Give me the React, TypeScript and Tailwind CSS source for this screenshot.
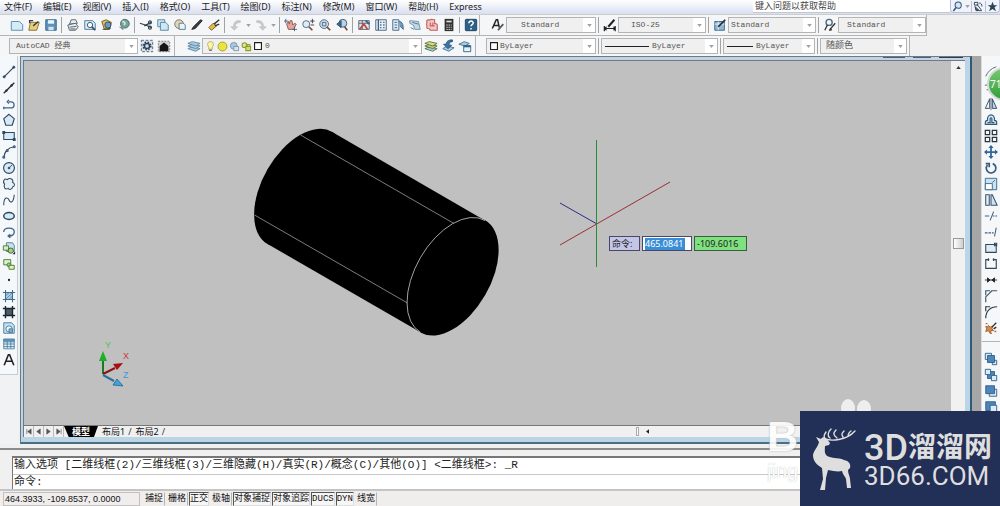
import React from "react";

const S = "#2b4763";
const B = "#7fb2d6";

const glyphs: Record<string, React.ReactNode> = {
  new: <path d="M1.500 4h9l4 3.500v6.500h-13z" fill="#d5ecf7" stroke="#4f86a8" />,
  open: (
    <g>
      <path d="M2 14l2-9h10l-3 9z" fill="#e8cf79" stroke="#7d6a35" />
      <path d="M3 6V3h4M7 9l6-5" stroke="#3a3a3a" fill="none" strokeWidth="1.500" />
    </g>
  ),
  save: (
    <g>
      <path d="M2 2h12v12H2z" fill="#5b94bb" stroke="#2f607f" />
      <path d="M4.500 2.500h7v4h-7z" fill="#e9f5fb" />
      <path d="M5 10h6v4H5z" fill="#cfe2ee" />
    </g>
  ),
  plot: (
    <g stroke="#4f5a66" fill="#e8edf2">
      <path d="M4 7l2-5h5l2 4z" />
      <path d="M2 8l9-2 3 4-3 4H4z" />
      <path d="M4 10.500l8-1M5 12.500h6" />
    </g>
  ),
  preview: (
    <g>
      <path d="M2 3h9l3 3v7H2z" fill="#d8eaf4" stroke="#44779a" />
      <circle cx="8" cy="8" r="3" fill="#fff" stroke="#2c4a68" />
      <path d="M10 10l4 4" stroke="#2c4a68" strokeWidth="2" />
    </g>
  ),
  publish: (
    <g>
      <path d="M2 4l5-2 6 3-2 8H5z" fill="#e0c054" stroke="#68562a" />
      <circle cx="9" cy="8" r="3.500" fill="#6b9cc5" stroke="#2d4862" />
      <path d="M3 13l9-1" stroke="#333" />
    </g>
  ),
  globe: (
    <g>
      <circle cx="9" cy="6.500" r="5" fill="#76a58f" stroke="#42636a" />
      <path d="M6 4c3 0 4 2 2 4" stroke="#cfe7ec" fill="none" strokeWidth="2" />
      <path d="M2 10l5 4 1-4z" fill="#7e8f9d" />
    </g>
  ),
  cut: (
    <g fill="none" stroke="#33404c" strokeWidth="1.300">
      <path d="M1 6l8 2.500M14 5L6 9M14 11L8 8" />
      <circle cx="12.500" cy="5" r="1.700" />
      <circle cx="12.500" cy="11" r="1.700" />
    </g>
  ),
  copy: (
    <g fill="#cfe7f3" stroke="#4a7f9f">
      <path d="M2 2h8v8H2z" />
      <path d="M5 5h6l3 3v6H5z" />
    </g>
  ),
  paste: (
    <g>
      <circle cx="7" cy="7" r="5" fill="#ddd6bd" stroke="#756f52" />
      <path d="M7 6h5l2 2v5H7z" fill="#e9f4f9" stroke="#54748a" />
    </g>
  ),
  match: <path d="M2 13l4-1 8-9-2-1-8 8z" fill="#3e3a35" stroke="#22201e" />,
  blockEdit: (
    <g>
      <path d="M2 11l5-5 4 3-6 5z" fill="#e7b94a" stroke="#775820" />
      <path d="M8 7l6-5M9 9l5-2" stroke="#333" strokeWidth="1.500" />
    </g>
  ),
  undo: <path d="M13 3C8 2 5 5 5 10H2l4 4 4-4H7c0-3 2-5 6-5z" fill="#c9c9c9" stroke="#b2b2b2" strokeWidth=".5" />,
  redo: <path d="M3 3c5-1 8 2 8 7h3l-4 4-4-4h3c0-3-2-5-6-5z" fill="#c9c9c9" stroke="#b2b2b2" strokeWidth=".5" />,
  pan: (
    <g>
      <path d="M3 7l2 6h6l3-6-2-1-2 2-1-5-2 0-1 4-1-3z" fill="#e0a79d" stroke="#8d5048" />
      <path d="M2 1v5M0 3.500h5M12 10v5M10 13h5" stroke="#3d5e88" />
    </g>
  ),
  zoomRt: (
    <g fill="none" stroke="#45617c">
      <circle cx="6" cy="7" r="4" fill="#dcebf5" />
      <path d="M9 10l4 4" strokeWidth="2" stroke="#7d4a36" />
      <path d="M13 1v5M10.500 3.500h5M11 8h4" stroke="#333" />
    </g>
  ),
  zoomWin: (
    <g fill="none" stroke="#45617c">
      <circle cx="7" cy="7" r="5" fill="#cfe1ee" />
      <path d="M5 5h4v4H5z" />
      <path d="M10 10l4 4" strokeWidth="2" stroke="#7d4a36" />
    </g>
  ),
  zoomPrev: (
    <g fill="none" stroke="#38546f">
      <circle cx="9" cy="6" r="4.500" fill="#b9d3e6" />
      <path d="M2 7l5-4v8z" fill="#3a6593" />
      <path d="M11 10l3 4" strokeWidth="2" stroke="#7d4a36" />
    </g>
  ),
  props: (
    <g>
      <path d="M2 3h12v10H2z" fill="#e9e0e4" stroke="#4c5f73" />
      <path d="M2 6h12M6 3v10" stroke="#4c5f73" />
      <path d="M3 13l5-6 4 6" stroke="#b84943" fill="none" strokeWidth="2" />
      <path d="M10 3l4 4" stroke="#345e91" strokeWidth="2" />
    </g>
  ),
  design: (
    <g stroke="#3f5f7e" fill="#e7f1f7">
      <path d="M2 2h12v12H2z" />
      <path d="M5 2v12M7 5h1.500M10.500 5H12M7 8h1.500M10.500 8H12M7 11h1.500M10.500 11H12" strokeWidth="1.500" />
    </g>
  ),
  palettes: (
    <g stroke="#3f5f7e" fill="#dcebf4">
      <path d="M2 2h7v12H2z" />
      <path d="M4 5h3M4 8h3M4 11h3" />
      <path d="M9 4c4 0 5 3 5 9l-4-4" fill="#6c9dc1" />
    </g>
  ),
  sheets: (
    <g stroke="#6c8fa6" fill="#c1d7e3">
      <path d="M2 3l10 1 2 9H8L6 8 2 6z" />
      <path d="M3 11l4 2M5 5l7 2" stroke="#4d7087" />
    </g>
  ),
  markup: (
    <g stroke="#c4605d" fill="#f1c8c5" strokeWidth="1.300">
      <path d="M2 3c2-2 3 0 4-1s3 0 5 0v4c1 1 3 0 3 2s0 3 0 6H6c0-2-1-2-3-2s0-3-1-4 1-3 0-5z" />
      <path d="M6 5v4h5M9 5v4" fill="none" />
    </g>
  ),
  calc: (
    <g>
      <path d="M3 1h10v14H3z" fill="#303030" />
      <path d="M5 3h6v2H5z" fill="#d8e0cf" />
      <path d="M5 8h1.500M7.500 8H9M10 8h1M5 10.500h1.500M7.500 10.500H9M10 10.500h1M5 13h1.500M7.500 13H9M10 13h1" stroke="#fff" />
    </g>
  ),
  help: (
    <g>
      <rect x="1.500" y="1.500" width="13" height="13" rx="1" fill="#2d6089" stroke="#1b3f5d" />
      <path d="M5.500 6c0-3.500 5.500-3 5 0-.3 1.600-2.500 1.500-2.500 3.500M8 11.500v1.500" fill="none" stroke="#fff" strokeWidth="1.700" />
    </g>
  ),
  textStyle: (
    <g fill="none" stroke="#222" strokeWidth="1.700">
      <path d="M1.500 12L6 2h1.500l2 9M3 8.500h6" />
      <path d="M8 14l6-7" strokeWidth="2" stroke="#555" />
    </g>
  ),
  dimStyle: (
    <g fill="none" stroke="#222" strokeWidth="1.300">
      <path d="M1.500 9v6M14 9v6M2 12h12M4 10l-2 2 2 2M12 10l2 2-2 2" />
      <path d="M6 10l7-8" strokeWidth="2.200" />
    </g>
  ),
  tableStyle: (
    <g>
      <path d="M2 4h11v10H2z" fill="#90b9d6" stroke="#345f82" />
      <path d="M2 7h11M6 4v10" stroke="#e6f2f9" />
      <path d="M6 10l8-8" stroke="#2a2a2a" strokeWidth="2" />
    </g>
  ),
  leaderStyle: (
    <g fill="none" stroke="#333" strokeWidth="1.500">
      <circle cx="7" cy="5" r="3.500" stroke="#4a6680" />
      <path d="M5 8l-3 6M8 13l6-7" />
      <path d="M7 14l3-1" strokeWidth="2" />
    </g>
  ),
  gear: (
    <g>
      <path d="M1.500 1.500h13v13h-13z" fill="#d8e2ea" stroke="#41566b" strokeDasharray="3 2" />
      <circle cx="8" cy="8" r="4.300" fill="none" stroke="#2d3f52" strokeWidth="1.800" strokeDasharray="1.700 1.700" />
      <circle cx="8" cy="8" r="3" fill="#9fb6c9" stroke="#2d3f52" strokeWidth="1.500" />
      <circle cx="8" cy="8" r="1" fill="#fff" />
    </g>
  ),
  home: (
    <g>
      <path d="M1.500 2.500h13v12h-13z" fill="#cfd3d6" stroke="#777" strokeDasharray="2 1.500" />
      <path d="M8 4l5 4v6H3V8z" fill="#151515" />
    </g>
  ),
  layers: (
    <g fill="#a6cbe2" stroke="#5f87a3">
      <path d="M1 11l5-2 9 2-5 3z" />
      <path d="M1 8l5-2 9 2-5 3z" />
      <path d="M1 5l5-2 9 2-5 3z" />
    </g>
  ),
  layersGreen: (
    <g fill="#b5cc86" stroke="#56713b">
      <path d="M1 11l5-2 9 2-5 3z" fill="#a6cbe2" />
      <path d="M1 8l5-2 9 2-5 3z" />
      <path d="M1 5l5-2 9 2-5 3z" fill="#e0d67b" />
    </g>
  ),
  layerPrev: (
    <g>
      <path d="M2 11l5-3 8 2-6 4z" fill="#a6cbe2" stroke="#47718f" />
      <path d="M13 1c-5 0-7 2-7 5H3l5 5 4-4H9c0-2 1-4 4-4z" fill="#3b76a8" stroke="#214a6e" />
    </g>
  ),
  layerState: (
    <g>
      <path d="M1 6l6-3 6 2-5 3z" fill="#a6cbe2" stroke="#47718f" />
      <path d="M6.500 7.500h8v7h-8z" fill="#e6f2f9" stroke="#2f6189" />
      <path d="M6.500 8.500h8" stroke="#2f6189" strokeWidth="2" />
    </g>
  ),
  bulb: (
    <g>
      <path d="M8 1c5 0 5 5 2.500 8v3h-5V9C3 6 3 1 8 1z" fill="#fdf7a4" stroke="#9a9348" />
      <path d="M6 13.500h4" stroke="#555" strokeWidth="1.500" />
    </g>
  ),
  sun: <circle cx="8" cy="8" r="6.500" fill="#ece43e" stroke="#8b8726" />,
  freeze: (
    <g stroke="#5f819b">
      <circle cx="7" cy="7" r="5" fill="#a9c7dc" />
      <path d="M7 8h7v6H7z" fill="#d5e5ef" />
    </g>
  ),
  lock: (
    <g stroke="#8c9a34" fill="none" strokeWidth="1.500">
      <circle cx="5" cy="6" r="3.500" fill="#dbe386" />
      <path d="M7 8h7v6H7zM9 8V5h4v3" fill="#d4dc74" />
    </g>
  ),
  square: <path d="M2.500 2.500h11v11h-11z" fill="#fff" stroke="#222" strokeWidth="1.800" />,
  line: (
    <g stroke={S} fill={S}>
      <path d="M2.500 13.500l11-11" strokeWidth="1.300" />
      <circle cx="2.500" cy="13.500" r="1.200" />
      <circle cx="13.500" cy="2.500" r="1.200" />
    </g>
  ),
  xline: (
    <g stroke="#26333f" fill="#26333f">
      <path d="M2 14L14 2" strokeWidth="1.600" />
      <circle cx="5" cy="11" r="1" />
      <circle cx="11" cy="5" r="1" />
    </g>
  ),
  pline: <path d="M2 12.500h8c5 0 5-7 0-7H8M8 3.500l-2 2 2 2M2 11v3" fill="none" stroke="#3d6488" strokeWidth="1.500" />,
  polygon: <path d="M8 1.500l6 5-2.300 7.500H4.300L2 6.500z" fill="#d6eaf5" stroke={S} strokeWidth="1.300" />,
  rect: <path d="M2 4h12v8H2zM1 3h2v2H1zM13 11h2v2h-2z" fill="#d6eaf5" stroke={S} strokeWidth="1.200" />,
  arc: (
    <g stroke={S} fill="none">
      <path d="M2 14C3 7 7 3 14 2" strokeWidth="1.300" />
      <path d="M1 13h2v2H1zM13 1h2v2h-2zM5 5.500h2v2H5z" fill={B} />
    </g>
  ),
  circle: (
    <g stroke={S}>
      <circle cx="8" cy="8" r="6.200" fill="#d6eaf5" strokeWidth="1.300" />
      <path d="M8 8l3.500-3.500" />
      <circle cx="8" cy="8" r="1" fill={S} />
    </g>
  ),
  cloud: <path d="M3 8C0 5 3 1 6 3c3-3 8 0 6 3 3 1 3 5 0 5.500 0 3-4 3.500-5 1.500-3 2-6-1-4-5z" fill="#e4f0f7" stroke={S} strokeWidth="1.200" />,
  spline: <path d="M2 14C2 3 7 5 8 8s5 5 6-6" fill="none" stroke={S} strokeWidth="1.200" />,
  ellipse: <ellipse cx="8" cy="8" rx="6" ry="4" fill="#d6eaf5" stroke={S} strokeWidth="1.700" />,
  earc: <path d="M2 8c0-6 12-6 12 0 0 3-3 5-6 4.500M9.500 10.500L7 12.500l2.500 2" fill="none" stroke="#3d6488" strokeWidth="1.500" />,
  insert: (
    <g>
      <path d="M5 2h7l2 3v7H5z" fill="#c9e2f0" stroke="#4a7590" />
      <path d="M1.500 5.500h6v5h-6z" fill="#d9ecc2" stroke="#41762f" />
      <circle cx="10" cy="11" r="3" fill="#a8cf84" stroke="#355f28" />
      <path d="M12 15h3v-3z" fill="#222" />
    </g>
  ),
  block: (
    <g stroke="#41762f">
      <path d="M2 3h8v6H2z" fill="#dff0cd" />
      <circle cx="8" cy="9" r="2.200" fill="#a8cf84" />
      <path d="M8 9.500h6v4.500H8z" fill="#e6efb9" />
    </g>
  ),
  point: <circle cx="8" cy="8" r="1.300" fill="#222" />,
  hatch: (
    <g stroke="#3f6a8c">
      <path d="M4 4h8v8H4z" fill="#a8cde4" />
      <path d="M1 4h14M1 12h14M4 1v14M12 1v14" strokeWidth="1.200" />
      <path d="M4 8l4-4M4 12l8-8M8 12l4-4" strokeWidth=".7" />
    </g>
  ),
  gradient: (
    <g stroke="#1c252d">
      <path d="M4 4h8v8H4z" fill="#4d5b66" />
      <path d="M1 4h14M1 12h14M4 1v14M12 1v14" strokeWidth="1.600" />
    </g>
  ),
  region: (
    <g stroke="#44779a">
      <path d="M2 2h9l3 3v9H2z" fill="#c4e0ef" />
      <circle cx="8" cy="9" r="3.500" fill="#eef7fb" />
      <path d="M8 9h4v4H8z" fill="#84b3cf" />
    </g>
  ),
  table: (
    <g stroke="#4c7fa3">
      <path d="M2 2.500h12v11H2z" fill="#e3f1f8" />
      <path d="M2 5.500h12M2 8h12M2 11h12M6 3v10M10 3v10" />
      <path d="M2 2.500h12v2H2z" fill="#6fa2c4" />
    </g>
  ),
  mtext: <path d="M2.500 14L7.300 2h1.400l4.800 12M4.500 9.500h7" fill="none" stroke="#222" strokeWidth="1.800" />,
  erase: <path d="M2 13c2-5 6-9 12-11M8 13h4" fill="none" stroke="#4b5d6e" />,
  copyObj: <path d="M1 5l4-1M5 2v4M3 10h4M9 11a2 2 0 1 0 .1 0" fill="none" stroke="#3b5873" />,
  mirror: (
    <g stroke="#27445f">
      <path d="M6.500 2v11H1.500z" fill="#f1f6fa" />
      <path d="M9.500 2v11h5z" fill="#b9d7e8" />
      <path d="M8 1v14" stroke="#667" />
    </g>
  ),
  offset: (
    <g fill="#d3e8f4" stroke="#31577a" strokeWidth="1.300">
      <path d="M1.500 13v-2c0-2 1-2.500 2.500-2.500C3 0 13 0 12 8.500c1.500 0 2.500.5 2.500 2.500v2z" />
      <path d="M4 11h3V6.500c0-1.500 2-1.500 2 0V11h3" fill="none" />
    </g>
  ),
  array: <path d="M1.500 1.500h5v5h-5zM9.500 1.500h5v5h-5zM1.500 9.500h5v5h-5zM9.500 9.500h5v5h-5z" fill="#f3f7fa" stroke="#27333e" strokeWidth="1.400" />,
  move: <path d="M8 0l3 3.500H9V7h3.500V5L16 8l-3.500 3V9H9v3.500h2L8 16l-3-3.500h2V9H3.500v2L0 8l3.500-3v2H7V3.500H5z" fill="#2f659a" />,
  rotate: (
    <g fill="none" stroke="#33597e" strokeWidth="1.900">
      <path d="M4 4.500a5.500 5.500 0 1 0 6-1.500" />
      <path d="M2 3h4v4" />
    </g>
  ),
  scale: (
    <g stroke="#34628a" fill="#cbe3f1">
      <path d="M1.500 1.500h13v13h-13z" />
      <path d="M1.500 7.500h8v7h-8z" fill="#fff" />
      <path d="M9.500 6.500l3-3" fill="none" />
    </g>
  ),
  stretch: (
    <g stroke="#34536f" fill="#e6f1f7" strokeWidth="1.200">
      <path d="M2 2h4v12H2z" />
      <path d="M8 2h1.500L15 14H8z" fill="#cfe3ef" />
    </g>
  ),
  trim: <path d="M1 8h5M7 13l4-10M10 8h2M13 8h2" fill="none" stroke="#43627d" strokeWidth="1.200" />,
  extend: <path d="M1 9h3M5 9h3M9 9h2M12 13l2-10" fill="none" stroke="#43627d" strokeWidth="1.200" />,
  breakPt: <path d="M2 4h12v9H2zM12 2.500h2.500v3H12z" fill="#dcebf4" stroke="#31475c" strokeWidth="1.200" />,
  brk: <path d="M6 3H2v10h12V3h-4M5 1.500v3M11 1.500v3" fill="none" stroke="#31475c" strokeWidth="1.300" />,
  join: <path d="M1 8h14M4 5.500l3 2.500-3 2.500zM12 5.500L9 8l3 2.500z" fill="#222" stroke="#222" />,
  chamfer: <path d="M2 15V9l7-7h6M2 7V2h5" fill="none" stroke="#3d556b" strokeWidth="1.300" />,
  fillet: <path d="M2 15C2 7 7 2 15 2M2 7V2h5" fill="none" stroke="#26394b" strokeWidth="1.300" />,
  explode: (
    <g>
      <path d="M2 6l2 1 1-2 2 2 3-1-1 3 2 2-3 0-1 3-2-3-3 1 1-3z" fill="#d98944" stroke="#9a5a2b" />
      <path d="M2 3h2M12 12h2M7 14h2" stroke="#b86c34" strokeWidth="1.500" />
      <path d="M9 7l5-5M11 9l3-2" stroke="#333" strokeWidth="1.600" />
    </g>
  ),
  front: (
    <g stroke="#2d5d87">
      <path d="M1.500 1.500h7v7h-7zM9.500 9.500h5v5h-5z" fill="#dcecf6" />
      <path d="M4 4h8v8H4z" fill="#4d86b8" />
    </g>
  ),
  back: (
    <g stroke="#2d5d87">
      <path d="M4 4h8v8H4z" fill="#4d86b8" />
      <path d="M1.500 1.500h6v6h-6zM8.500 8.500h6v6h-6z" fill="#dcecf6" />
    </g>
  ),
  above: (
    <g stroke="#2d5d87">
      <path d="M6 6h8.500v8H6z" fill="#dcecf6" />
      <path d="M2 2h10v9H2z" fill="#4d86b8" />
    </g>
  ),
  under: (
    <g stroke="#2d5d87">
      <path d="M2 2h11v10H2z" fill="#4d86b8" />
      <path d="M7 6h7.500v8H7z" fill="#dcecf6" />
    </g>
  ),
  search: (
    <g stroke="#33597e" fill="#d3e5f2" strokeWidth="1.500">
      <circle cx="9" cy="6" r="4.500" />
      <path d="M6 9.500l-4 5" strokeWidth="2.200" />
    </g>
  ),
  comm: (
    <g stroke="#2b3947" fill="none" strokeWidth="1.300">
      <path d="M2 2h5v4H2zM6 5l6 8M4 14h9M9 3c3 0 4 2 4 5" />
      <path d="M3 8l5 5H4z" fill="#5d7a96" />
    </g>
  ),
  star: <path d="M8 1l2 5h5l-4 3 2 6-5-3.500L3 15l2-6-4-3h5z" fill="#2c4258" />,
};

function Glyph({ name, size = "h-[14px] w-[14px]" }: { name: string; size?: string }) {
  return (
    <svg viewBox="0 0 16 16" aria-hidden="true" className={`${size} block shrink-0`}>
      {glyphs[name]}
    </svg>
  );
}

function Tool({ name }: { name: string }) {
  return (
    <button type="button" aria-label={name} className="flex h-4 w-[17px] shrink-0 items-center justify-center">
      <Glyph name={name} />
    </button>
  );
}

function Sep() {
  return (
    <span className="flex w-[5px] shrink-0 justify-center">
      <span className="h-4 w-px bg-[#a2a2a2]" />
    </span>
  );
}

function Caret({ width }: { width: string }) {
  return (
    <span className={`flex shrink-0 items-center justify-center ${width}`}>
      <svg viewBox="0 0 6 4" aria-hidden="true" className="h-[3px] w-[5px]">
        <path d="M0 0h6L3 4z" fill="#a0a0a0" />
      </svg>
    </span>
  );
}

function Combo({ label, value, width, pad = "pl-1", text = "text-[8px]", children }: { label: string; value: string; width: string; pad?: string; text?: string; children?: React.ReactNode }) {
  return (
    <label className={`flex h-4 shrink-0 items-center border border-[#b4b4b4] bg-[#f0f0f0] ${width}`}>
      {children}
      <select
        aria-label={label}
        className={`h-full min-w-0 flex-1 appearance-none bg-transparent font-['Liberation_Mono','Noto_Sans_CJK_SC',monospace] leading-[14px] text-[#555] outline-none ${text} ${pad}`}
      >
        <option>{value}</option>
      </select>
      <span className="flex h-full bg-white">
        <Caret width="w-3" />
      </span>
    </label>
  );
}

const menus = ["文件(F)", "编辑(E)", "视图(V)", "插入(I)", "格式(O)", "工具(T)", "绘图(D)", "标注(N)", "修改(M)", "窗口(W)", "帮助(H)", "Express"];
const drawTools = ["line", "xline", "pline", "polygon", "rect", "arc", "circle", "cloud", "spline", "ellipse", "earc", "insert", "block", "point", "hatch", "gradient", "region", "table", "mtext"];
const modifyTools = ["erase", "copyObj", "mirror", "offset", "array", "move", "rotate", "scale", "stretch", "trim", "extend", "breakPt", "brk", "join", "chamfer", "fillet", "explode"];
const modes = [
  { name: "捕捉", on: false },
  { name: "栅格", on: false },
  { name: "正交", on: true },
  { name: "极轴", on: false },
  { name: "对象捕捉", on: true },
  { name: "对象追踪", on: true },
  { name: "DUCS", on: true },
  { name: "DYN", on: true },
  { name: "线宽", on: false },
];

function MenuBar() {
  return (
    <header className="flex h-[14px] items-center bg-linear-to-b from-white to-[#d9dff0]">
      <nav className="flex gap-[11px] pl-1 text-[9px] leading-[14px] text-[#1c1c1c]">
        {menus.map((m) => (
          <button key={m} type="button" className="whitespace-nowrap">
            {m}
          </button>
        ))}
      </nav>
      <div className="ml-auto flex h-full">
        <input
          aria-label="搜索帮助"
          placeholder="键入问题以获取帮助"
          className="h-[13px] w-[197px] border-b border-[#c2c8d4] bg-white pl-[2px] text-[9px] text-[#333] outline-none placeholder:text-[#444]"
        />
        <div className="flex h-[13px] items-center rounded-b border border-t-0 border-[#b7c1d6] bg-[#f0f3fa]">
          <button type="button" aria-label="搜索" className="px-px"><Glyph name="search" size="h-[11px] w-[11px]" /></button>
          <Caret width="w-[7px]" />
          <button type="button" aria-label="通讯中心" className="border-l border-[#b7c1d6] px-px"><Glyph name="comm" size="h-[11px] w-[11px]" /></button>
          <button type="button" aria-label="收藏夹" className="border-l border-[#b7c1d6] px-px"><Glyph name="star" size="h-[11px] w-[11px]" /></button>
        </div>
      </div>
    </header>
  );
}

function StandardBar() {
  const bar = "flex h-full items-center border-r border-b border-[#b4b4b4] bg-[#f5f6f7]";
  return (
    <div className="flex h-[22px] shrink-0 border-t border-[#cdcdcd]">
      <div className={`${bar} w-[480px] shrink-0 pl-2`}>
        {["new", "open", "save"].map((n) => <Tool key={n} name={n} />)}
        <Sep />
        {["plot", "preview", "publish", "globe"].map((n) => <Tool key={n} name={n} />)}
        <Sep />
        {["cut", "copy", "paste", "match", "blockEdit"].map((n) => <Tool key={n} name={n} />)}
        <Sep />
        <Tool name="undo" />
        <Caret width="w-2" />
        <Tool name="redo" />
        <Caret width="w-2" />
        <Sep />
        {["pan", "zoomRt", "zoomWin", "zoomPrev"].map((n) => <Tool key={n} name={n} />)}
        <Sep />
        {["props", "design", "palettes", "sheets", "markup", "calc"].map((n) => <Tool key={n} name={n} />)}
        <Sep />
        <Tool name="help" />
      </div>
      <div className={`${bar} w-[447px] shrink-0 pl-[9px]`}>
        <Tool name="textStyle" />
        <Combo label="文字样式" value="Standard" width="w-[90px]" pad="pl-[14px]" />
        <Sep />
        <Tool name="dimStyle" />
        <Combo label="标注样式" value="ISO-25" width="w-[88px]" pad="pl-3" />
        <Sep />
        <Tool name="tableStyle" />
        <Combo label="表格样式" value="Standard" width="w-[88px]" pad="pl-[2px]" />
        <Sep />
        <Tool name="leaderStyle" />
        <Combo label="多重引线样式" value="Standard" width="w-[88px]" pad="pl-2" />
      </div>
    </div>
  );
}

function LayerBar() {
  const bar = "flex h-full shrink-0 items-center border-r border-[#b4b4b4] bg-[#f5f6f7]";
  return (
    <div className="flex h-5 shrink-0">
      <div className={`${bar} w-[175px] pl-[9px]`}>
        <Combo label="工作空间" value="AutoCAD 经典" width="w-[129px]" pad="pl-[6px]" />
        <Tool name="gear" />
        <Tool name="home" />
      </div>
      <div className={`${bar} w-[301px] pl-[10px]`}>
        <Tool name="layers" />
        <Combo label="图层" value="0" width="w-[220px]" pad="pl-[2px]">
          <span className="flex items-center gap-px pl-[2px]">
            {["bulb", "sun", "freeze", "lock"].map((n) => <Glyph key={n} name={n} size="h-[11px] w-[11px]" />)}
            <Glyph name="square" size="h-[10px] w-[10px]" />
          </span>
        </Combo>
        {["layersGreen", "layerPrev", "layerState"].map((n) => <Tool key={n} name={n} />)}
      </div>
      <div className={`${bar} w-[434px] pl-[10px]`}>
        <Combo label="颜色" value="ByLayer" width="w-[110px]" pad="pl-px">
          <span className="pl-[2px]"><Glyph name="square" size="h-[10px] w-[10px]" /></span>
        </Combo>
        <Sep />
        <Combo label="线型" value="ByLayer" width="w-[117px]" pad="pl-[3px]">
          <span className="ml-[3px] h-px w-[44px] shrink-0 bg-[#222]" />
        </Combo>
        <Sep />
        <Combo label="线宽" value="ByLayer" width="w-[92px]" pad="pl-[3px]">
          <span className="ml-[3px] h-px w-[26px] shrink-0 bg-[#222]" />
        </Combo>
        <Sep />
        <Combo label="打印样式" value="随颜色" width="w-[87px]" pad="pl-[5px]" text="text-[9px]" />
      </div>
    </div>
  );
}

function Drawing() {
  return (
    <div className="relative min-w-0 flex-1 overflow-hidden bg-[#c0c0c0]">
      <svg className="absolute inset-0 h-full w-full" role="img" aria-label="圆柱体">
        <g transform="translate(-24 -61)">
          <path d="M332.200 132L485 220.500L420.500 332.300L267.600 244z" fill="#000" />
          <ellipse cx="299.900" cy="188" rx="64.800" ry="37.400" transform="rotate(-60 299.900 188)" fill="#000" />
          <ellipse cx="452.800" cy="276.400" rx="64.800" ry="37.400" transform="rotate(-60 452.800 276.400)" fill="#000" />
          <path d="M300.500 135L454 223.500M254.500 215L407.500 303" stroke="#9a9a9a" strokeWidth=".8" fill="none" />
          <path d="M485 220.500A64 37.100 -60 0 0 420.500 332.300" stroke="#b4b4b4" strokeWidth=".9" fill="none" />
          <path d="M560 245L670 182" stroke="#9b2f35" />
          <path d="M560 203L597 224" stroke="#2c2c86" />
          <path d="M596.500 140V267" stroke="#2b8a35" />
          <path d="M103 374V360" stroke="#1c7a22" strokeWidth="2" />
          <path d="M103 351l4 10h-8z" fill="#1fae27" />
          <path d="M103 374l12-6" stroke="#8c1414" strokeWidth="2" />
          <path d="M123 363l-10 1 4 6z" fill="#a31111" />
          <path d="M103 375l11 6" stroke="#2b6f9c" strokeWidth="2" />
          <path d="M123 386l-6-7-4 6z" fill="#3ca4e0" stroke="#1c5880" strokeWidth=".7" />
          <g fontFamily="Liberation Sans, sans-serif" fontSize="9">
            <text x="105" y="348" fill="#4fc455">Y</text>
            <text x="123" y="359" fill="#cc3434">X</text>
            <text x="123" y="378" fill="#3c94dc">Z</text>
          </g>
        </g>
      </svg>
      <div className="absolute top-[175px] left-[585px] flex gap-[2px] text-[9px] leading-[13px] text-[#222]">
        <label htmlFor="dyn-x" className="w-[31px] border border-[#46466f] bg-[#c5c5e6] pl-[2px]">命令:</label>
        <span className="flex w-[50px] items-center border border-[#46466f] bg-white pl-[2px]">
          <input id="dyn-x" defaultValue="465.0841" className="h-3 w-10 bg-[#3a8ed6] font-['Noto_Sans',sans-serif] text-[9px] text-white outline-none" />
        </span>
        <input aria-label="Y" defaultValue="-109.6016" className="h-[15px] w-[53px] border border-[#35603c] bg-[#7ee07e] pl-[2px] font-['Noto_Sans',sans-serif] outline-none" />
      </div>
    </div>
  );
}

function ModelTabs() {
  return (
    <div className="flex h-3 shrink-0 items-stretch border-t border-[#777] bg-[#f0f0f0] text-[9px] leading-[11px]">
      {["M2 1v6M7 1L3 4l4 3z", "M6 1L2 4l4 3z", "M2 1l4 3-4 3z", "M7 1v6M2 1l4 3-4 3z"].map((d) => (
        <button key={d} type="button" aria-label="切换布局" className="flex w-[10px] items-center justify-center border-r border-[#bbb]">
          <svg viewBox="0 0 8 8" className="h-[7px] w-[7px]" aria-hidden="true">
            <path d={d} fill="#555" stroke="#555" strokeWidth=".7" />
          </svg>
        </button>
      ))}
      <button type="button" className="bg-black px-2 font-bold text-white [clip-path:polygon(0_0,100%_0,88%_100%,14%_100%)]">模型</button>
      <button type="button" className="pl-1 text-[#111]">布局1</button>
      <span className="px-[3px] text-[#333]">/</span>
      <button type="button" className="pl-px text-[#111]">布局2</button>
      <span className="px-[3px] text-[#333]">/</span>
      <div className="ml-auto flex w-[35%] items-center bg-[#f1f1f1]">
        <span className="h-[9px] w-[3px] border border-[#aaa] bg-white" />
        <svg viewBox="0 0 4 6" className="ml-[7px] h-[5px] w-[3px]" aria-hidden="true"><path d="M4 0v6L0 3z" fill="#222" /></svg>
      </div>
    </div>
  );
}

function Workspace() {
  return (
    <main className="flex min-h-0 flex-1 overflow-hidden">
      <aside className="w-[18px] shrink-0 bg-[#f0f2f4]">
        <div className="flex flex-col border-r border-b border-[#c6ccd2] bg-[#f5f8fa] pt-2 pb-[6px]">
          {drawTools.map((n) => <Tool key={n} name={n} />)}
        </div>
      </aside>
      <section className="ml-[2px] flex min-w-0 flex-1 flex-col border-t border-r-2 border-b-2 border-l border-t-[#6b7989] border-r-[#2c5a78] border-b-[#4a6f80] border-l-[#6b7989] bg-[#bcd5e6]">
        <div className="flex h-[3px] shrink-0 items-start justify-end gap-2 bg-[#c3d3e3] pr-[7px]">
          <span className="h-px w-[22px] bg-[#496178]" />
          <span className="h-px w-[18px] bg-[#496178]" />
          <span className="h-px w-[24px] bg-[#2c3e50]" />
        </div>
        <div className="mr-[5px] mb-[5px] ml-[2px] flex min-h-0 flex-1 flex-col border-t border-l border-[#6f7884]">
          <div className="flex min-h-0 flex-1">
            <Drawing />
            <div className="flex w-[14px] shrink-0 flex-col items-center bg-[#f1f1f1] pb-2">
              <svg viewBox="0 0 6 4" className="mt-[5px] h-[3px] w-[5px]" aria-hidden="true"><path d="M0 4h6L3 0z" fill="#333" /></svg>
              <span className="my-auto h-[11px] w-[11px] border border-[#999] bg-linear-to-r from-white to-[#cfcfcf]" />
            </div>
          </div>
          <ModelTabs />
        </div>
      </section>
      <div className="w-[9px] shrink-0 bg-[#a6a6a6]" />
      <aside className="relative flex w-[19px] shrink-0 flex-col border-l border-[#dcdcdc] bg-[#f5f7f9]">
        <div className="flex flex-col border-b border-[#b4b4b4] pt-2 pb-[5px]">
          {modifyTools.map((n) => <Tool key={n} name={n} />)}
        </div>
        <div className="flex flex-col pt-[9px]">
          {["front", "back", "above", "under"].map((n) => <Tool key={n} name={n} />)}
        </div>
        <div className="absolute top-[11px] left-[5px] w-[14px] overflow-hidden">
          <div className="flex h-[34px] w-[34px] items-center rounded-full border-2 border-[#d5d9d5] bg-linear-to-b from-[#74c96f] to-[#2f9f3b] pl-px text-[10px] text-white">71</div>
        </div>
      </aside>
    </main>
  );
}

function CommandPanel() {
  const mono = "font-['Liberation_Mono','Noto_Sans_CJK_SC',monospace] text-[11px]";
  return (
    <section className="shrink-0 border-b-2 border-[#c4c4c4] bg-[#f0f0f0] pt-1">
      <div className="border-t-2 border-[#8b8b8b] pt-[6px] pl-3">
        <div className={`border-t-2 border-l border-[#777] bg-white text-[#222] ${mono}`}>
          <p className="h-[17px] overflow-hidden border-b border-[#c8c8c8] pl-px leading-[14px] whitespace-nowrap">
            输入选项 [二维线框(2)/三维线框(3)/三维隐藏(H)/真实(R)/概念(C)/其他(O)] &lt;二维线框&gt;: _R
          </p>
          <label className="flex h-[14px] items-center pl-px leading-[14px]">
            命令:
            <input className="h-[14px] min-w-0 flex-1 bg-transparent pl-1 outline-none" />
          </label>
        </div>
      </div>
    </section>
  );
}

function StatusBar() {
  return (
    <footer className="flex h-[15px] shrink-0 items-center gap-[3px] bg-[#f0eded] pl-[3px] text-[9px] leading-[13px] text-[#111]">
      <output className="h-[14px] w-[137px] border border-[#c4c0c0] pl-px font-['Liberation_Sans',sans-serif]">464.3933, -109.8537, 0.0000</output>
      <div className="flex gap-px font-['Liberation_Mono','Noto_Sans_CJK_SC',monospace]">
        {modes.map((m) => (
          <button
            key={m.name}
            type="button"
            aria-pressed={m.on}
            className={`h-[14px] border whitespace-nowrap ${m.on ? "border-t-[#555] border-r-[#ddd] border-b-[#ddd] border-l-[#555] bg-[#f7f6f6]" : "border-t-transparent border-r-[#b5b5b5] border-b-transparent border-l-transparent px-px"}`}
          >
            {m.name}
          </button>
        ))}
      </div>
    </footer>
  );
}

function Watermark() {
  return (
    <div aria-hidden="true" className="pointer-events-none absolute right-[200px] bottom-0 h-[110px] w-[33px] text-white">
      <div className="flex h-full w-full flex-col overflow-hidden font-['Liberation_Sans',sans-serif]">
        <span className="mt-[19px] h-[43px] text-[43px] leading-[43px] font-bold opacity-90 [text-shadow:0_0_2px_#aaa]">B</span>
        <span className="h-[26px] text-[20px] leading-[26px] [text-shadow:0_0_1px_#aaa]">jing</span>
      </div>
      <svg viewBox="0 0 34 24" className="absolute top-[2px] left-[73px] h-6 w-[34px]">
        <ellipse cx="8" cy="10" rx="7" ry="9" fill="#eee" />
        <ellipse cx="24" cy="11" rx="7" ry="9" fill="#eee" />
      </svg>
    </div>
  );
}

function Brand() {
  return (
    <div className="absolute right-0 bottom-0 flex h-[95px] w-[200px] items-center bg-[#222f56] text-[#dedede]">
      <svg viewBox="0 0 46 62" className="mt-px ml-3 h-[62px] w-[46px] shrink-0" aria-hidden="true">
        <path
          d="M4 9l5 2c1-2 3-2 5-1l4 5-1 2-4 1c0 3-1 6 1 9 4 4 12 2 18 5 5 1 7 4 6 8l-2 2c0 4 2 6 2 9l1 9h-4l-1-9c-1-3-3-4-4-8-4 1-9 0-14-1l-2 8-1 12H8l3-11-1-11C5 37 1 33 1 27c1-5 5-8 6-13z"
          fill="#dedede"
        />
        <path d="M14 12c-3-3-2-5 0-8M13 11c6 2 21 2 30-8M18 10c-3-2-2-6 1-9M25 10c-4-3-4-5-1-8M31 9c-2-3-1-4 1-6M36 7c1-1 0-2 3-4" stroke="#dedede" strokeWidth="1.400" fill="none" strokeLinecap="round" />
      </svg>
      <div className="ml-[6px] flex flex-col gap-[2px]">
        <div className="flex h-8 items-center font-['Roboto','Noto_Sans_CJK_SC',sans-serif] leading-8 font-medium whitespace-nowrap">
          <span className="text-[36px]">3D</span>
          <span className="text-[28px] font-bold">溜溜网</span>
        </div>
        <span className="h-5 font-['Roboto',sans-serif] text-[26px] leading-5 whitespace-nowrap">3D66.COM</span>
      </div>
    </div>
  );
}

export default function App() {
  return (
    <div className="relative flex h-screen flex-col overflow-hidden bg-[#f0f0f0] font-['Noto_Sans','Noto_Sans_CJK_SC',sans-serif]">
      <MenuBar />
      <StandardBar />
      <LayerBar />
      <Workspace />
      <CommandPanel />
      <StatusBar />
      <Watermark />
      <Brand />
    </div>
  );
}
